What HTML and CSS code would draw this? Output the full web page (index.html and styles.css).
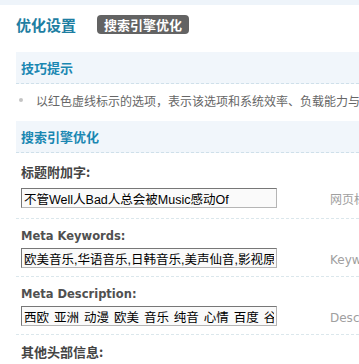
FILE: index.html
```html
<!DOCTYPE html>
<html lang="zh-CN">
<head>
    <meta charset="UTF-8">
    <title>优化设置</title>
    <link rel="stylesheet" href="styles.css">
</head>
<body>
    <div class="topbar"></div>
    <div class="page">
        <div class="title-row">
            <h1 class="title">优化设置</h1>
            <span class="badge">搜索引擎优化</span>
        </div>

        <div class="section">
            <div class="section-head">技巧提示</div>
            <ul class="tips">
                <li>以红色虚线标示的选项，表示该选项和系统效率、负载能力与资源消耗有关</li>
            </ul>
        </div>

        <div class="section">
            <div class="section-head">搜索引擎优化</div>
            <div class="field first">
                <div class="label cn">标题附加字:</div>
                <div class="row">
                    <input type="text" class="text-input" value="不管Well人Bad人总会被Music感动Of">
                    <span class="hint">网页标题通常是搜索引擎关注的重点</span>
                </div>
            </div>
            <div class="field">
                <div class="label">Meta Keywords:</div>
                <div class="row">
                    <input type="text" class="text-input" value="欧美音乐,华语音乐,日韩音乐,美声仙音,影视原声">
                    <span class="hint">Keywords 项出现在页面头部</span>
                </div>
            </div>
            <div class="field">
                <div class="label">Meta Description:</div>
                <div class="row">
                    <input type="text" class="text-input spaced" value="西欧 亚洲 动漫 欧美 音乐 纯音 心情 百度 谷歌">
                    <span class="hint">Description 出现在页面头部</span>
                </div>
            </div>
            <div class="field last">
                <div class="label cn">其他头部信息:</div>
            </div>
        </div>
    </div>
</body>
</html>
```

FILE: styles.css
```css
body {
    margin: 0;
    background-color: #fff;
    font-family: "DejaVu Sans", "Noto Sans CJK SC", sans-serif;
    font-size: 12px;
    color: #444;
    overflow: hidden;
}

.topbar {
    height: 5px;
    background-color: #eef4fa;
}

.page {
    padding-left: 16px;
}

.title-row {
    display: flex;
    align-items: center;
    height: 38px;
    margin-bottom: 9px;
}

.title {
    margin: 0;
    font-family: "Noto Sans CJK SC", sans-serif;
    font-size: 15px;
    font-weight: bold;
    color: #1e7ea2;
}

.badge {
    margin-left: 21px;
    padding: 0 7px;
    height: 19px;
    line-height: 19px;
    border-radius: 4px;
    background-color: #636363;
    color: #fff;
    font-family: "Noto Sans CJK SC", sans-serif;
    font-size: 13px;
    font-weight: bold;
}

.section-head {
    height: 31px;
    line-height: 31px;
    padding-left: 5px;
    background-color: #f1f6fb;
    border-bottom: 1px dashed #cfe0ea;
    font-family: "Noto Sans CJK SC", sans-serif;
    font-size: 13px;
    font-weight: bold;
    color: #1a87b2;
}

.tips {
    list-style: none;
    margin: 0;
    padding: 8px 0 13px 3px;
    white-space: nowrap;
}

.tips li {
    display: flex;
    align-items: center;
    height: 16px;
    font-family: "Noto Sans CJK SC", sans-serif;
    font-size: 12px;
    color: #666;
}

.tips li::before {
    content: "";
    flex-shrink: 0;
    width: 4px;
    height: 4px;
    border-radius: 50%;
    background-color: #c4c4c4;
    margin-right: 13px;
}

.field {
    padding: 9px 0 8px 5px;
    border-bottom: 1px dashed #dbe7ec;
}

.field.first {
    padding-top: 11px;
    padding-bottom: 10px;
}

.field.last {
    border-bottom: none;
}

.label {
    height: 16px;
    line-height: 16px;
    margin-bottom: 4px;
    font-weight: bold;
    font-size: 11.5px;
    color: #505050;
}

.label.cn {
    font-family: "Noto Sans CJK SC", sans-serif;
    font-size: 13px;
    color: #444;
}

.field.first .label {
    margin-bottom: 8px;
}

.row {
    display: flex;
    align-items: center;
    white-space: nowrap;
}

.text-input {
    flex-shrink: 0;
    box-sizing: border-box;
    width: 256px;
    height: 20px;
    padding: 0 2px;
    margin: 0;
    border: 1px solid #b5b5b5;
    border-top-color: #777;
    border-left-color: #777;
    background-color: #fafafa;
    font-family: "Liberation Sans", "Noto Sans CJK SC", sans-serif;
    font-size: 12.5px;
    color: #000;
    outline: none;
}

.text-input.spaced {
    word-spacing: 1.5px;
}

.hint {
    margin-left: 53px;
    color: #a0a0a0;
    font-size: 12px;
}
```
